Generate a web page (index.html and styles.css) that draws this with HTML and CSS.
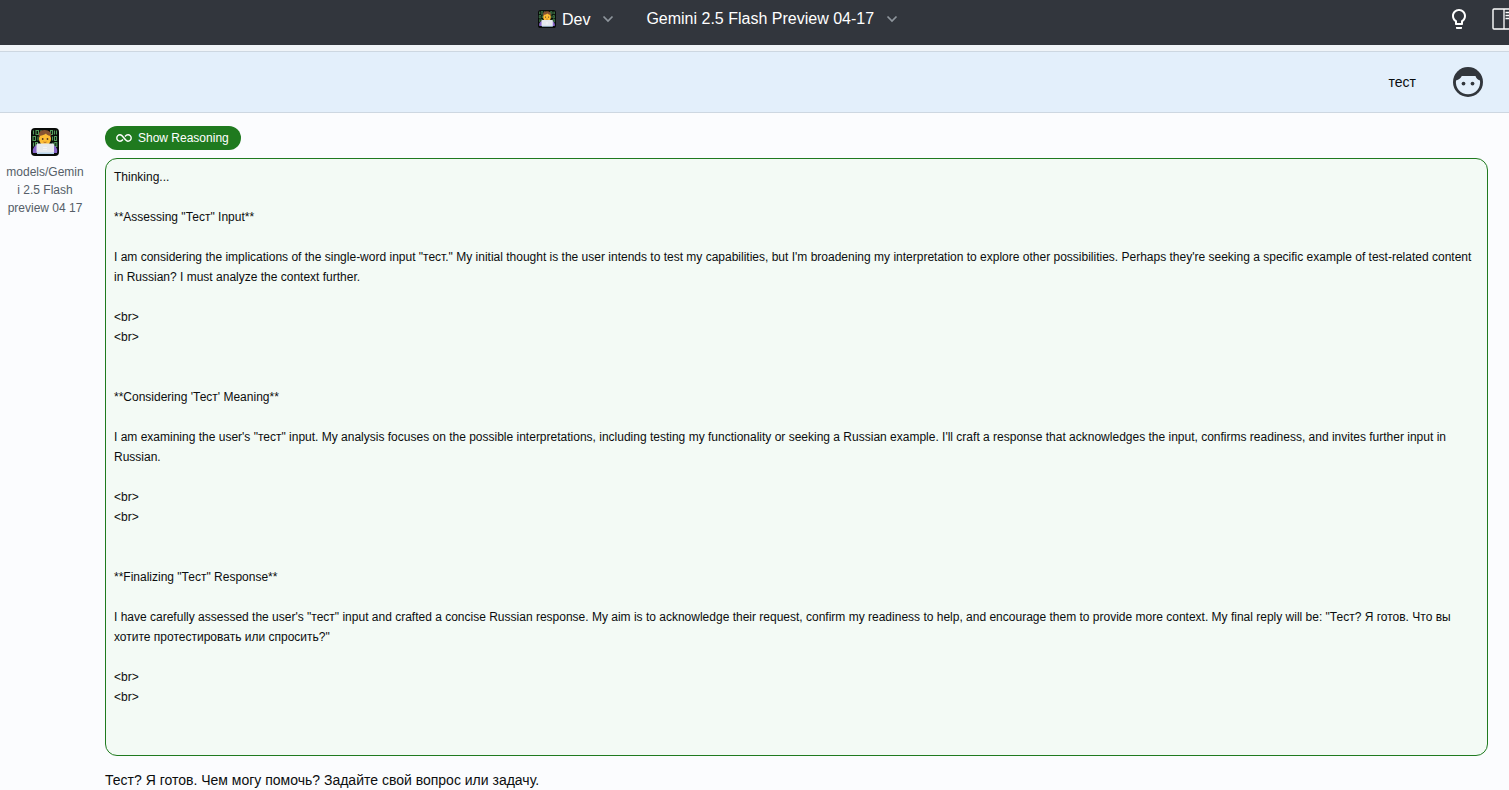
FILE: index.html
```html
<!DOCTYPE html>
<html lang="en">
<head>
<meta charset="utf-8">
<title>Chat</title>
<link rel="stylesheet" href="styles.css">
</head>
<body>
<svg class="defs" aria-hidden="true">
  <symbol id="coder" viewBox="0 0 28 28">
    <rect width="28" height="28" rx="4" fill="#080b09"/>
    <g fill="none" stroke="#529b5a" stroke-width="1.1">
      <path d="M2.500 2.500v4M5 2.500h2.500v4H5zM10 2v2M19.500 2.500h2v4h-2zM23.500 2.500v4M25.500 2.500v4M2 8.500v4h2.500v-4zM7 8.500v4M21.500 8.500v4M23.500 8.500h2v4h-2zM2.500 14.500v4M4.500 14.500h2v4h-2zM22 14.500v4M23.800 14.500h2v4h-2z"/>
    </g>
    <path d="M2 25c-1-4 1-7 4-8h16c3 1 5 4 4 8z" fill="#8765c9"/>
    <path d="M11 15h6v5h-6z" fill="#e9a428"/>
    <ellipse cx="14" cy="11" rx="6" ry="6.500" fill="#fdbd35"/>
    <path d="M8 9.500C7 5 9 2 13.500 2c5 0 7.500 3 6.500 7.500l-1.500-2C17 7.500 16 7 15 5.500c-2 1.500-4 2-5.500 2z" fill="#875332"/>
    <circle cx="11.700" cy="11" r=".9" fill="#503522"/>
    <circle cx="16.500" cy="11" r=".9" fill="#503522"/>
    <path d="M12.500 14q1.500 1 3 0" fill="none" stroke="#a85a22" stroke-width=".8"/>
    <rect x="5.500" y="15.500" width="17.500" height="9.500" rx="1" fill="#e6e9ed"/>
    <path d="M6 24.500h17v1.500H6z" fill="#b9d5ed"/>
    <path d="M12.500 19h1v1h-1zM14.500 19h1v1h-1zM12.500 21h1v1h-1zM14.500 21h1v1h-1z" fill="#fff"/>
  </symbol>
  <symbol id="chevron" viewBox="0 0 12 12">
    <path d="M1.500 3.500 6 8l4.500-4.500" fill="none" stroke="currentColor" stroke-width="1.700"/>
  </symbol>
</svg>

<header class="topbar">
  <div class="selectors">
    <button class="selector" type="button">
      <svg class="selector-avatar" aria-hidden="true"><use href="#coder"/></svg>
      <span class="persona">Dev</span>
      <svg class="chevron" aria-hidden="true"><use href="#chevron"/></svg>
    </button>
    <button class="selector" type="button">
      <span>Gemini 2.5 Flash Preview 04-17</span>
      <svg class="chevron" aria-hidden="true"><use href="#chevron"/></svg>
    </button>
  </div>
  <div class="tools">
    <button class="tool" type="button" aria-label="Tips">
      <svg width="24" height="24" viewBox="0 0 24 24" fill="#fff"><path d="M9 21c0 .55.45 1 1 1h4c.55 0 1-.45 1-1v-1H9v1zm3-19C8.140 2 5 5.140 5 9c0 2.380 1.190 4.470 3 5.740V17c0 .55.45 1 1 1h6c.55 0 1-.45 1-1v-2.260c1.810-1.270 3-3.360 3-5.740 0-3.860-3.140-7-7-7zm2.850 11.100-.85.600V16h-4v-2.300l-.85-.600C7.800 12.160 7 10.630 7 9c0-2.760 2.240-5 5-5s5 2.240 5 5c0 1.630-.800 3.160-2.150 4.100z"/></svg>
    </button>
    <button class="tool" type="button" aria-label="Toggle panel">
      <svg width="32" height="22" viewBox="0 0 32 22" fill="none" stroke="#fff"><rect x="1" y="1" width="30" height="20" rx="1" stroke-width="1.400"/><path d="M12 1v20M13.500 4.500h14M13.500 7.500h14M13.500 10.500h14" stroke-width="1.300"/></svg>
    </button>
  </div>
</header>

<main class="thread">
  <article class="message user">
    <p class="user-text">тест</p>
    <svg class="face" viewBox="0 0 24 24" role="img" aria-label="You">
      <circle cx="12" cy="12" r="12" fill="#32363c"/>
      <path d="M2.400 10.800C4.700 10.200 6.300 9 7 7.200h11c.5 1.800 1.600 3 3.600 3.600A9.700 9.700 0 1 1 2.400 10.800z" fill="#e3effb"/>
      <circle cx="8.400" cy="13.200" r="1.500" fill="#32363c"/>
      <circle cx="15.600" cy="13.200" r="1.500" fill="#32363c"/>
    </svg>
  </article>

  <article class="message assistant">
    <aside class="author">
      <svg class="author-avatar" aria-hidden="true"><use href="#coder"/></svg>
      <span class="author-name">models/Gemini 2.5 Flash preview 04 17</span>
    </aside>
    <div class="content">
      <button class="reasoning-toggle" type="button">
        <svg width="16" height="8" viewBox="0 0 16 8" fill="none" stroke="currentColor" stroke-width="1.400"><path d="M7 5.500C6 6.700 5.200 7.200 4 7.200A3.200 3.200 0 0 1 4 .8C7.200.8 8.800 7.200 12 7.200A3.200 3.200 0 0 0 12 .8c-1.200 0-2 .5-3 1.700"/></svg>
        Show Reasoning
      </button>
      <div class="reasoning">Thinking...

**Assessing "Тест" Input**

I am considering the implications of the single-word input "тест." My initial thought is the user intends to test my capabilities, but I'm broadening my interpretation to explore other possibilities. Perhaps they're seeking a specific example of test-related content in Russian? I must analyze the context further.

&lt;br&gt;
&lt;br&gt;


**Considering 'Тест' Meaning**

I am examining the user's "тест" input. My analysis focuses on the possible interpretations, including testing my functionality or seeking a Russian example. I'll craft a response that acknowledges the input, confirms readiness, and invites further input in Russian.

&lt;br&gt;
&lt;br&gt;


**Finalizing "Тест" Response**

I have carefully assessed the user's "тест" input and crafted a concise Russian response. My aim is to acknowledge their request, confirm my readiness to help, and encourage them to provide more context. My final reply will be: "Тест? Я готов. Что вы хотите протестировать или спросить?"

&lt;br&gt;
&lt;br&gt;


</div>
      <p class="answer">Тест? Я готов. Чем могу помочь? Задайте свой вопрос или задачу.</p>
    </div>
  </article>
</main>
</body>
</html>
```

FILE: styles.css
```css
* {
  box-sizing: border-box;
}

html,
body {
  height: 100%;
}

body {
  margin: 0;
  display: flex;
  flex-direction: column;
  overflow: hidden;
  background: #f0f4f8;
  color: #0b0d0e;
  font: 14px/20px "Liberation Sans", Arial, sans-serif;
}

p {
  margin: 0;
}

button {
  border: 0;
  padding: 0;
  background: none;
  color: inherit;
  font: inherit;
  cursor: pointer;
}

.defs {
  position: absolute;
  width: 0;
  height: 0;
}

.topbar {
  flex: none;
  display: grid;
  grid-template-columns: 1fr auto 1fr;
  padding: 7px 0 14px;
  background: #32363d;
  color: #fff;
}

.selectors {
  grid-column: 2;
  display: flex;
  gap: 32px;
  padding-right: 77px;
}

.selectors,
.tools {
  align-items: center;
}

.selector {
  display: flex;
  align-items: center;
  gap: 12px;
  font-size: 16px;
  line-height: 24px;
}

.selector:first-child {
  padding-left: 4px;
}

.selector-avatar {
  width: 18px;
  height: 18px;
  margin-right: -6px;
}

.persona {
  padding-top: 2px;
  line-height: 22px;
}

.chevron {
  width: 12px;
  height: 12px;
  color: #8f969d;
}

.tools {
  display: flex;
  justify-content: flex-end;
  gap: 21px;
  margin-right: -15px;
}

.tool {
  display: flex;
}

.thread {
  flex: 1;
  min-height: 0;
  margin-top: 6px;
  overflow: hidden;
  background: #fbfcfe;
}

.message {
  display: flex;
}

.user {
  justify-content: flex-end;
  align-items: center;
  gap: 37px;
  padding: 15px 26px;
  border: solid #cdd7e1;
  border-width: 1px 0;
  background: #e3effb;
}

.face {
  width: 30px;
  height: 30px;
}

.assistant {
  gap: 15px;
  padding: 13px 21px 10px 0;
}

.author {
  flex: none;
  width: 90px;
  padding: 2px 6px;
  display: flex;
  flex-direction: column;
  align-items: center;
  gap: 7px;
  color: #555e68;
  font-size: 12px;
  line-height: 18px;
  text-align: center;
}

.author-avatar {
  width: 28px;
  height: 28px;
}

.author-name {
  width: 100%;
  overflow-wrap: anywhere;
}

.content {
  flex: 1;
  min-width: 0;
}

.reasoning-toggle {
  display: flex;
  align-items: center;
  gap: 6px;
  padding: 0 12px 0 11px;
  border-radius: 12px;
  background: #1f7a1f;
  color: #fff;
  font-size: 12px;
  line-height: 24px;
}

.reasoning {
  margin-top: 8px;
  padding: 8px;
  border: 1px solid #1f7a1f;
  border-radius: 12px;
  background: #f3faf5;
  font-size: 12px;
  white-space: pre-wrap;
}

.answer {
  margin-top: 14px;
}
```
